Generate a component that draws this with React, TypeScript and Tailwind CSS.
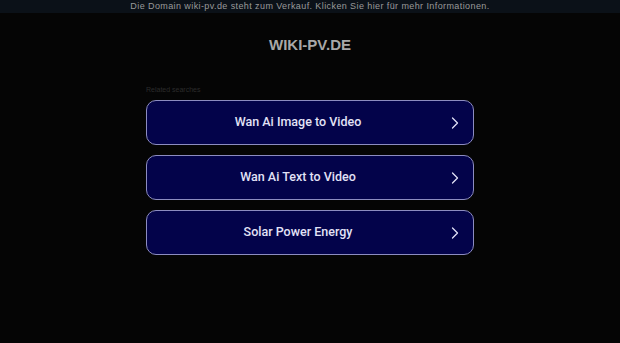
import { ChevronRight } from "lucide-react";

const searches = ["Wan Ai Image to Video", "Wan Ai Text to Video", "Solar Power Energy"];

export default function App() {
    return (
        <div className="min-h-[343px] w-full bg-[#050505] font-['Liberation_Sans',Arial,sans-serif]">
            <div className="flex h-[13px] items-center justify-center bg-[#0b1118] text-[9px] tracking-[0.045em] text-[#9a9a9a]">
                Die Domain wiki-pv.de steht zum Verkauf. Klicken Sie hier für mehr Informationen.
            </div>
            <div className="mt-[23px] text-center text-[15px] font-bold leading-[18px] text-[#a8a8a8]">
                WIKI-PV.DE
            </div>
            <div className="mx-auto mt-[31px] w-[328px]">
                <p className="mb-[5px] text-[7px] leading-[10px] text-[#2c2c2c]">Related searches</p>
                <div className="flex flex-col gap-[10px]">
                    {searches.map((s) => (
                        <div
                            key={s}
                            className="relative flex h-[45px] items-center justify-center rounded-[10px] border border-[#8c8cc0] bg-[#03034a] pr-[24px] font-['Roboto',sans-serif] text-[12.5px] font-medium text-[#e2e2f6]"
                        >
                            {s}
                            <ChevronRight className="absolute right-[8px] h-[20px] w-[20px] text-[#e2e2f6]" strokeWidth={1.5} />
                        </div>
                    ))}
                </div>
            </div>
        </div>
    );
}
